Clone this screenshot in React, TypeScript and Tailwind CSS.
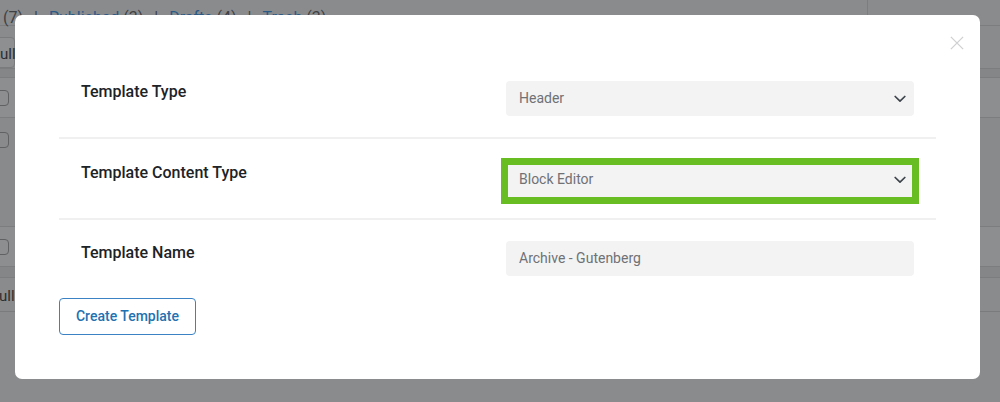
import React from "react";

function Chevron() {
  return (
    <svg width="12" height="8" viewBox="0 0 12 8" fill="none" className="shrink-0">
      <path d="M1.2 1.5l4.8 4.6 4.8-4.6" stroke="#3c434a" strokeWidth="1.7" strokeLinecap="round" strokeLinejoin="round" />
    </svg>
  );
}

function SelectBox({ value, highlighted }: { value: string; highlighted?: boolean }) {
  return (
    <div className="relative mt-[23px] w-[408px] h-[35px]">
      <div className="flex items-center justify-between h-full rounded-[4px] bg-[#f3f3f3] pl-[13px] pr-[8px] text-[14px] text-[#6f7175]">
        <span>{value}</span>
        <Chevron />
      </div>
      {highlighted && (
        <div className="absolute left-[-5px] right-[-5px] top-[-4px] bottom-[-7px] border-[7px] border-[#68bd23]" />
      )}
    </div>
  );
}

function FieldRow({ label, children, last }: { label: string; children: React.ReactNode; last?: boolean }) {
  return (
    <div className={`flex justify-between px-[22px] ${last ? "h-[78px]" : "h-[81px] border-b-2 border-[#f0f0f0]"}`}>
      <div className={`${last ? "pt-[23px]" : "pt-[24px]"} leading-[20px] text-[16px] font-medium text-[#1d2327]`}>{label}</div>
      {children}
    </div>
  );
}

export default function App() {
  return (
    <div className="relative w-[1000px] h-[402px] overflow-hidden bg-[#8a8b8d]" style={{ fontFamily: "Roboto, 'Liberation Sans', sans-serif" }}>
      {/* page behind the overlay */}
      <div className="flex flex-col h-full">
        <div className="flex items-start h-[26px] border-b border-[#7c7d7f]">
          <div className="pl-[3px] pt-[8px] leading-[20px] text-[16px] text-[#3f4143] whitespace-nowrap">
            (7)<span className="mx-[11px]">|</span><span className="text-[#2b5a86]">Published</span> (3)<span className="mx-[11px]">|</span><span className="text-[#2b5a86]">Drafts</span> (4)<span className="mx-[11px]">|</span><span className="text-[#2b5a86]">Trash</span> (3)
          </div>
          <div className="ml-auto mr-[132px] w-px h-[26px] bg-[#7c7d7f]" />
        </div>
        <div className="flex items-center h-[42px] pt-[10px]">
          <div className="h-[31px] w-[18px] -ml-[3px] pl-[2px] pt-[4px] flex items-center rounded-r border border-[#7a7b7d] bg-[#8e8f91] text-[15px] text-[#2c2e30]">ull</div>
        </div>
        <div className="h-[10px] bg-[#858688] border-y border-[#7c7d7f]" />
        <div className="flex items-center h-[40px] border-b border-[#7c7d7f] bg-[#8d8e90]">
          <div className="-ml-[8px] w-[17px] h-[16px] rounded-[4px] border border-[#5f6163]" />
        </div>
        <div className="flex items-start h-[109px] pt-[14px] border-b border-[#7c7d7f] bg-[#888a8c]">
          <div className="-ml-[8px] w-[17px] h-[16px] rounded-[4px] border border-[#5f6163]" />
        </div>
        <div className="flex items-center h-[40px] border-b border-[#7c7d7f] bg-[#8d8e90]">
          <div className="-ml-[8px] w-[17px] h-[16px] rounded-[4px] border border-[#5f6163]" />
        </div>
        <div className="h-[11px] bg-[#858688] border-b border-[#7c7d7f]" />
        <div className="flex items-center h-[34px] border-b border-[#7a7b7d]">
          <div className="h-[34px] w-[18px] -ml-[3px] pl-[2px] pt-[3px] flex items-center text-[15px] text-[#2c2e30]">ull</div>
        </div>
      </div>

      {/* modal */}
      <div className="absolute left-[15px] top-[15px] w-[965px] h-[364px] rounded-[7px] bg-white px-[44px] pt-[43px]">
        <button className="absolute right-[16px] top-[21px] w-[14px] h-[14px] flex items-center justify-center" aria-label="Close">
          <svg width="16" height="16" viewBox="0 0 16 16" fill="none">
            <path d="M1 1l14 14M15 1L1 15" stroke="#cfd0d2" strokeWidth="1.5" />
          </svg>
        </button>
        <FieldRow label="Template Type">
          <SelectBox value="Header" />
        </FieldRow>
        <FieldRow label="Template Content Type">
          <SelectBox value="Block Editor" highlighted />
        </FieldRow>
        <FieldRow label="Template Name" last>
          <div className="mt-[21px] w-[408px] h-[35px] flex items-center rounded-[4px] bg-[#f3f3f3] pl-[13px] text-[14px] text-[#6f7175]">
            Archive - Gutenberg
          </div>
        </FieldRow>
        <button className="w-[137px] h-[37px] rounded-[4px] border border-[#3b82c4] text-[14px] font-medium text-[#2271b1] bg-white">
          Create Template
        </button>
      </div>
    </div>
  );
}
